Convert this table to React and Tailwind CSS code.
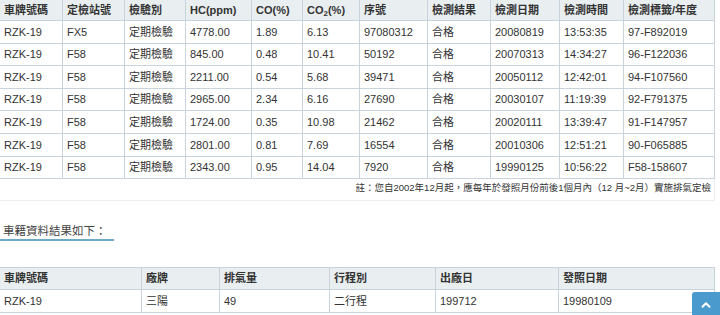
import { ChevronUp } from 'lucide-react'

const inspections = [
  ['RZK-19', 'FX5', '定期檢驗', '4778.00', '1.89', '6.13', '97080312', '合格', '20080819', '13:53:35', '97-F892019'],
  ['RZK-19', 'F58', '定期檢驗', '845.00', '0.48', '10.41', '50192', '合格', '20070313', '14:34:27', '96-F122036'],
  ['RZK-19', 'F58', '定期檢驗', '2211.00', '0.54', '5.68', '39471', '合格', '20050112', '12:42:01', '94-F107560'],
  ['RZK-19', 'F58', '定期檢驗', '2965.00', '2.34', '6.16', '27690', '合格', '20030107', '11:19:39', '92-F791375'],
  ['RZK-19', 'F58', '定期檢驗', '1724.00', '0.35', '10.98', '21462', '合格', '20020111', '13:39:47', '91-F147957'],
  ['RZK-19', 'F58', '定期檢驗', '2801.00', '0.81', '7.69', '16554', '合格', '20010306', '12:51:21', '90-F065885'],
  ['RZK-19', 'F58', '定期檢驗', '2343.00', '0.95', '14.04', '7920', '合格', '19990125', '10:56:22', 'F58-158607'],
]

// column widths (px) of the inspection table
const colWidths = ['w-[63px]', 'w-[62px]', 'w-[61px]', 'w-[66px]', 'w-[51px]', 'w-[57px]', 'w-[68px]', 'w-[63px]', 'w-[69px]', 'w-[64px]', 'w-[91px]']

const vehicleCols = [
  { label: '車牌號碼', w: 'w-[142px]' },
  { label: '廠牌', w: 'w-[78px]' },
  { label: '排氣量', w: 'w-[110px]' },
  { label: '行程別', w: 'w-[106px]' },
  { label: '出廠日', w: 'w-[123px]' },
  { label: '發照日期', w: 'w-[156px]' },
]
const vehicleRow = ['RZK-19', '三陽', '49', '二行程', '199712', '19980109']

const th = 'border border-[#c9d3db] bg-[#e9eef1] px-1 text-left font-bold text-[#333]'
const td = 'border border-[#c9d3db] px-1 text-left font-normal text-[#333]'

export default function App() {
  return (
    <div className="relative h-[315px] w-[720px] overflow-hidden bg-white font-['Liberation_Sans','Noto_Sans_CJK_TC',sans-serif] text-[11px] text-[#333]">
      {/* Inspection history */}
      <div className="-ml-px -mt-px w-[716px] border-b border-r border-[#eceff1] pb-[5px]">
        <table className="w-[716px] table-fixed border-collapse">
          <thead>
            <tr className="h-[21px]">
              {['車牌號碼', '定檢站號', '檢驗別', 'HC(ppm)', 'CO(%)'].map((h, i) => (
                <th key={h} className={`${th} ${colWidths[i]}`}>{h}</th>
              ))}
              <th className={`${th} ${colWidths[5]}`}>
                CO<sub className="text-[8px]">2</sub>(%)
              </th>
              {['序號', '檢測結果', '檢測日期', '檢測時間', '檢測標籤/年度'].map((h, i) => (
                <th key={h} className={`${th} ${colWidths[i + 6]}`}>{h}</th>
              ))}
            </tr>
          </thead>
          <tbody>
            {inspections.map((row, r) => (
              <tr key={r} className="h-[22.6px]">
                {row.map((cell, c) => (
                  <td key={c} className={td}>{cell}</td>
                ))}
              </tr>
            ))}
          </tbody>
        </table>
        <p className="mt-[2px] pr-[3px] text-right text-[9.5px] leading-[14px] text-[#333]">
          註：您自2002年12月起，應每年於發照月份前後1個月內（12 月~2月）實施排氣定檢
        </p>
      </div>

      {/* Vehicle registry */}
      <h2 className="mt-[22px] inline-block border-b-2 border-[#6fa9c4] pl-[3px] pr-[7px] text-[11.5px] font-normal leading-[16px] text-[#444]">
        車籍資料結果如下：
      </h2>

      <table className="-ml-px mt-[26px] w-[716px] table-fixed border-collapse">
        <thead>
          <tr className="h-[22px]">
            {vehicleCols.map(({ label, w }) => (
              <th key={label} className={`${th} ${w}`}>{label}</th>
            ))}
          </tr>
        </thead>
        <tbody>
          <tr className="h-[23px]">
            {vehicleRow.map((cell, i) => (
              <td key={i} className={td}>{cell}</td>
            ))}
          </tr>
        </tbody>
      </table>

      {/* back to top */}
      <button className="absolute bottom-0 right-0 flex h-[23px] w-[28px] items-center justify-center rounded-tl-[3px] bg-[#4a9acd] pt-[3px]">
        <ChevronUp size={14} strokeWidth={3.5} color="#ffffff" />
      </button>
    </div>
  )
}
